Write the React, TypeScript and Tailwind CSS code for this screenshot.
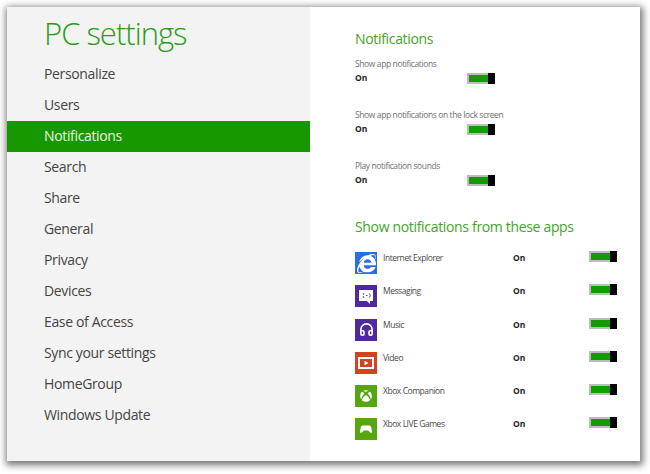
import React from "react";
import { FaInternetExplorer, FaXbox } from "react-icons/fa";
import { Headphones } from "lucide-react";

const navItems = [
  "Personalize",
  "Users",
  "Notifications",
  "Search",
  "Share",
  "General",
  "Privacy",
  "Devices",
  "Ease of Access",
  "Sync your settings",
  "HomeGroup",
  "Windows Update",
];

const settings = [
  "Show app notifications",
  "Show app notifications on the lock screen",
  "Play notification sounds",
];

function Toggle() {
  return (
    <div className="flex h-[11px] w-[28px] bg-[#bcbcbc]">
      <div className="my-[2px] ml-[2px] flex-1 bg-[#129c00]" />
      <div className="w-[7px] bg-black" />
    </div>
  );
}

function MessagingIcon() {
  return (
    <svg viewBox="0 0 22 22" className="h-[22px] w-[22px] bg-[#4e2a9a]">
      <path d="M4 5h14v11h-3v3l-3-3H4z" fill="#fff" />
      <circle cx="8.500" cy="9" r="0.8" fill="#4e2a9a" />
      <circle cx="8.500" cy="12" r="0.8" fill="#4e2a9a" />
      <path d="M11 10.500h1.500M14.500 8.500q1.500 2 0 4" stroke="#4e2a9a" strokeWidth="0.9" fill="none" />
    </svg>
  );
}

function VideoIcon() {
  return (
    <svg viewBox="0 0 22 22" className="h-[22px] w-[22px] bg-[#d6421f]">
      <rect x="3" y="5" width="16" height="12" fill="#fff" />
      <rect x="5" y="7" width="12" height="8" fill="#d6421f" />
      <path d="M9.500 8.800l4 2.200-4 2.200z" fill="#fff" />
    </svg>
  );
}

function GamesIcon() {
  return (
    <svg viewBox="0 0 22 22" className="h-[22px] w-[22px] bg-[#58a60f]">
      <path
        d="M8 7.500h6c1.200 0 1.900.7 2.200 1.700l.9 4.300c.2 1.100-.9 1.700-1.700 1l-2.400-2h-4l-2.400 2c-.8.7-1.900.1-1.700-1l.9-4.300C6.100 8.200 6.800 7.500 8 7.500z"
        fill="#fff"
      />
    </svg>
  );
}

const apps = [
  {
    name: "Internet Explorer",
    icon: (
      <div className="flex h-[22px] w-[22px] items-center justify-center bg-[#2a6fe0]">
        <FaInternetExplorer className="h-[19px] w-[19px] text-white" />
      </div>
    ),
  },
  { name: "Messaging", icon: <MessagingIcon /> },
  {
    name: "Music",
    icon: (
      <div className="flex h-[22px] w-[22px] items-center justify-center bg-[#4e2a9a]">
        <Headphones className="h-[15px] w-[15px] text-white" strokeWidth={2.6} />
      </div>
    ),
  },
  { name: "Video", icon: <VideoIcon /> },
  {
    name: "Xbox Companion",
    icon: (
      <div className="flex h-[22px] w-[22px] items-center justify-center bg-[#58a60f]">
        <FaXbox className="h-[12px] w-[12px] text-white" />
      </div>
    ),
  },
  { name: "Xbox LIVE Games", icon: <GamesIcon /> },
];

export default function App() {
  return (
    <div className="h-[474px] w-[650px] overflow-hidden bg-white pl-[7px] pt-[7px] font-['Open_Sans',sans-serif]">
      <div className="flex h-[454px] w-[633px] bg-white shadow-[1px_2px_7px_2px_rgba(0,0,0,0.55)]">
        <div className="h-full w-[303px] bg-[#f3f3f3]">
          <h1 className="pl-[37px] pt-[5px] text-[31px] font-light leading-[42px] tracking-[-1px] text-[#2a9d18]">
            PC settings
          </h1>
          <ul className="mt-[5px]">
            {navItems.map((item) => (
              <li
                key={item}
                className={
                  item === "Notifications"
                    ? "flex h-[31px] items-center bg-[#189800] pb-[2px] pl-[37px] text-[14px] tracking-[-0.35px] text-[#e8f5e4]"
                    : "flex h-[31px] items-center pb-[2px] pl-[37px] text-[14px] tracking-[-0.35px] text-[#444444]"
                }
              >
                {item}
              </li>
            ))}
          </ul>
        </div>

        <div className="h-full flex-1 pl-[45px] pt-[22px]">
          <h2 className="text-[14px] leading-[20px] tracking-[-0.33px] text-[#3fa528]">Notifications</h2>
          <div className="mt-[9px]">
            {settings.map((label) => (
              <div key={label} className="h-[51px]">
                <div className="text-[8.500px] leading-[12px] tracking-[-0.39px] text-[#707070]">{label}</div>
                <div className="mt-[2px] flex w-[140px] items-center justify-between">
                  <span className="text-[8.500px] font-bold leading-[12px] text-[#222222]">On</span>
                  <Toggle />
                </div>
              </div>
            ))}
          </div>
          <h2 className="mt-[6px] text-[14px] leading-[20px] tracking-[-0.33px] text-[#3fa528]">
            Show notifications from these apps
          </h2>
          <div className="mt-[14px]">
            {apps.map((app) => (
              <div key={app.name} className="flex h-[33.3px] w-[262px]">
                <div className="mt-px h-[22px] w-[22px]">{app.icon}</div>
                <span className="ml-[6px] mt-px w-[130px] text-[8.500px] leading-[12px] tracking-[-0.45px] text-[#4a4a4a]">
                  {app.name}
                </span>
                <span className="mt-px flex-1 text-[8.500px] font-bold leading-[12px] text-[#222222]">
                  On
                </span>
                <Toggle />
              </div>
            ))}
          </div>
        </div>
      </div>
    </div>
  );
}
